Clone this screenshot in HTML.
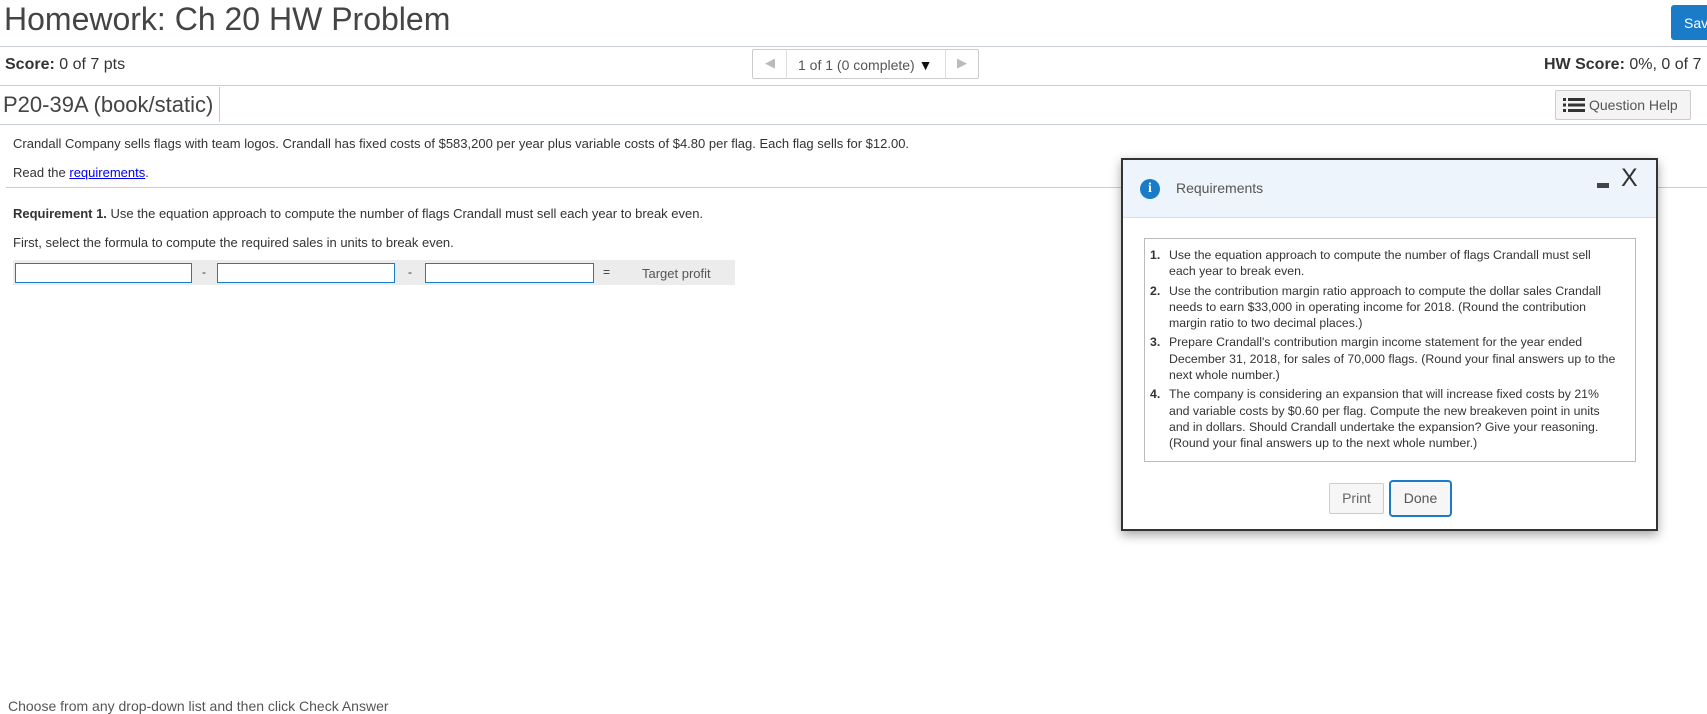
<!DOCTYPE html>
<html><head><style>
*{box-sizing:border-box;margin:0;padding:0}
body{width:1707px;height:712px;overflow:hidden;background:#fff;font-family:"Liberation Sans",Arial,sans-serif;color:#333;position:relative}
.a{position:absolute;white-space:nowrap}
.line{position:absolute;left:0;width:1707px;height:1px;background:#c8ccd4}
.inp{position:absolute;top:263px;height:20px;border:1px solid #1a7bc9;background:#fff}
ol{list-style:none}
li{position:relative;padding-left:24px;margin-bottom:3px;line-height:16.3px;white-space:normal}
li b{position:absolute;left:5px;top:0}
</style></head><body>
<div class="a" style="left:4px;top:1px;font-size:32px;color:#444">Homework: Ch 20 HW Problem</div>
<div class="a" style="left:1671px;top:5px;width:40px;height:35px;background:#1a7bc9;border-radius:3px;color:#fff;font-size:14px;padding:10px 0 0 13px">Sav</div>
<div class="line" style="top:46px"></div>
<div class="a" style="left:5px;top:56px;font-size:16px"><b>Score:</b> 0 of 7 pts</div>
<div class="a" style="left:752px;top:49px;width:227px;height:30px;border:1px solid #ccc;border-radius:2px;background:#fff"></div>
<div class="a" style="left:786px;top:49px;width:160px;height:30px;border-left:1px solid #ddd;border-right:1px solid #ddd"></div>
<div class="a" style="left:765px;top:55px;font-size:13px;color:#bbb">◀</div>
<div class="a" style="left:957px;top:55px;font-size:13px;color:#bbb">▶</div>
<div class="a" style="left:798px;top:57px;font-size:14px;color:#555">1 of 1 (0 complete) <span style="color:#111;font-size:14px">▼</span></div>
<div class="a" style="left:1544px;top:56px;font-size:16px"><b>HW Score:</b> 0%, 0 of 7</div>
<div class="line" style="top:85px"></div>
<div class="a" style="left:3px;top:92px;font-size:22px;color:#444">P20-39A (book/static)</div>
<div class="a" style="left:219px;top:87px;width:1px;height:35px;background:#ccc"></div>
<div class="a" style="left:1555px;top:90px;width:136px;height:30px;border:1px solid #ccc;border-radius:2px;background:#f4f4f4;font-size:14px;color:#555;padding:6px 0 0 33px">Question Help</div>
<svg class="a" style="left:1563px;top:97px" width="22" height="16"><g fill="#333"><rect x="0" y="1" width="3" height="3"/><rect x="0" y="6.5" width="3" height="3"/><rect x="0" y="12" width="3" height="3"/><rect x="5" y="1" width="17" height="3"/><rect x="5" y="6.5" width="17" height="3"/><rect x="5" y="12" width="17" height="3"/></g></svg>
<div class="line" style="top:124px"></div>
<div class="a" style="left:13px;top:136px;font-size:13px">Crandall Company sells flags with team logos. Crandall has fixed costs of $583,200 per year plus variable costs of $4.80 per flag. Each flag sells for $12.00.</div>
<div class="a" style="left:13px;top:165px;font-size:13px">Read the <span style="color:#00e;text-decoration:underline">requirements</span>.</div>
<div class="line" style="top:187px;left:6px"></div>
<div class="a" style="left:13px;top:206px;font-size:13px"><b>Requirement 1.</b> Use the equation approach to compute the number of flags Crandall must sell each year to break even.</div>
<div class="a" style="left:13px;top:235px;font-size:13px">First, select the formula to compute the required sales in units to break even.</div>
<div class="a" style="left:13px;top:260px;width:722px;height:25px;background:#ececec"></div>
<div class="inp" style="left:15px;width:177px"></div>
<div class="inp" style="left:217px;width:178px"></div>
<div class="inp" style="left:425px;width:169px"></div>
<div class="a" style="left:202px;top:265px;font-size:12px">-</div>
<div class="a" style="left:408px;top:265px;font-size:12px">-</div>
<div class="a" style="left:603px;top:265px;font-size:12px">=</div>
<div class="a" style="left:642px;top:266px;font-size:13px;color:#555">Target profit</div>
<div class="a" style="left:8px;top:698px;font-size:14px;color:#555">Choose from any drop-down list and then click Check Answer</div>

<div class="a" style="left:1121px;top:158px;width:537px;height:373px;border:2px solid #333;background:#fff;box-shadow:0 4px 10px rgba(0,0,0,.35)">
 <div style="height:58px;background:#eef4fb;border-bottom:1px solid #cfe2f3;position:relative">
  <div class="a" style="left:17px;top:19px;width:20px;height:20px;border-radius:50%;background:#1a7bc9;color:#fff;font:bold 14px 'Liberation Serif',serif;text-align:center;line-height:20px">i</div>
  <div class="a" style="left:53px;top:20px;font-size:14px;color:#555">Requirements</div>
  <div class="a" style="left:474px;top:23px;width:12px;height:5px;background:#444"></div>
  <div class="a" style="left:498px;top:4px;font-size:25px;color:#333">X</div>
 </div>
 <div class="a" style="left:21px;top:78px;width:492px;height:224px;border:1px solid #bbb;padding:8px 16px 0 0;font-size:12.3px;color:#333;white-space:normal">
  <ol>
   <li><b>1.</b>Use the equation approach to compute the number of flags Crandall must sell each year to break even.</li>
   <li><b>2.</b>Use the contribution margin ratio approach to compute the dollar sales Crandall needs to earn $33,000 in operating income for 2018. (Round the contribution margin ratio to two decimal places.)</li>
   <li><b>3.</b>Prepare Crandall's contribution margin income statement for the year ended December 31, 2018, for sales of 70,000 flags. (Round your final answers up to the next whole number.)</li>
   <li><b>4.</b>The company is considering an expansion that will increase fixed costs by 21% and variable costs by $0.60 per flag. Compute the new breakeven point in units and in dollars. Should Crandall undertake the expansion? Give your reasoning. (Round your final answers up to the next whole number.)</li>
  </ol>
 </div>
 <div class="a" style="left:206px;top:323px;width:55px;height:31px;border:1px solid #ccc;border-radius:2px;background:#f6f6f6;font-size:14px;color:#666;text-align:center;line-height:29px">Print</div>
 <div class="a" style="left:266px;top:320px;width:63px;height:37px;border:2px solid #1a7bc9;border-radius:4px;background:#f6f6f6;font-size:14px;color:#555;text-align:center;line-height:33px">Done</div>
</div>
</body></html>
